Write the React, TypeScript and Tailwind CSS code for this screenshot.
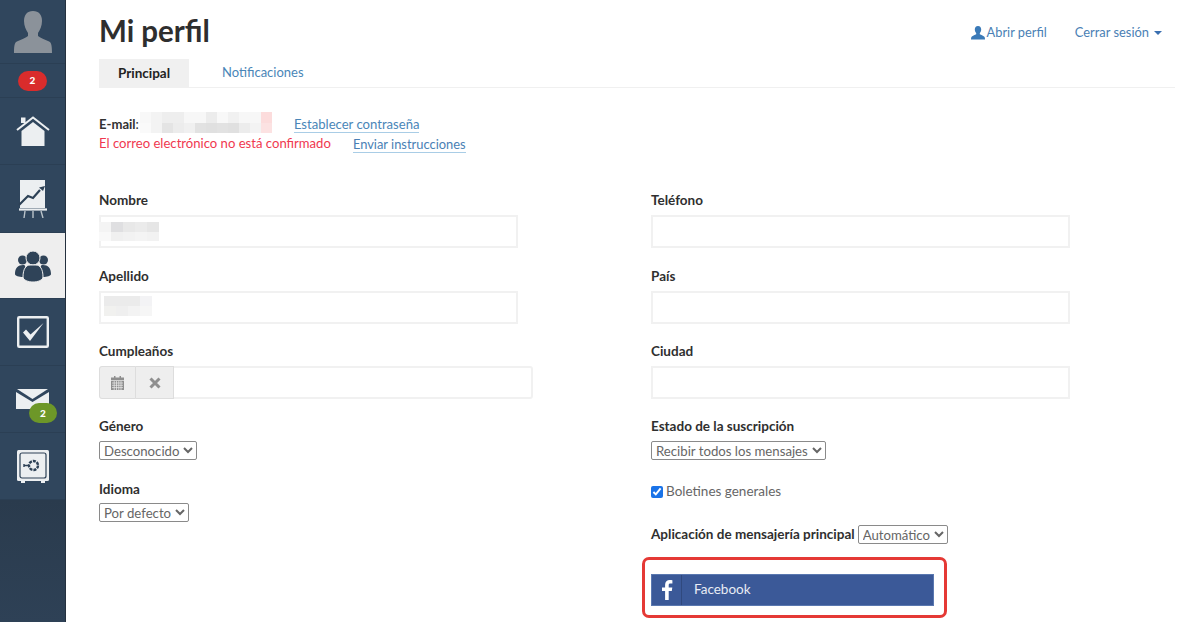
import { ReactNode } from "react";

const font = { fontFamily: "Lato, 'Open Sans', sans-serif" };

function Blur({ rows, size, h }: { rows: string[][]; size: number; h: number }) {
  return (
    <div className="flex flex-col">
      {rows.map((r, i) => (
        <div key={i} className="flex">
          {r.map((c, j) => (
            <div key={j} style={{ width: size, height: h, background: c }} />
          ))}
        </div>
      ))}
    </div>
  );
}

function NavItem({ active, children, h }: { active?: boolean; children: ReactNode; h: string }) {
  return (
    <div
      className={`${h} relative flex items-center justify-center border-b border-[#2b3f54] ${
        active ? "bg-[#eeeeee]" : ""
      }`}
    >
      {children}
    </div>
  );
}

function Sidebar() {
  return (
    <aside className="w-[66px] h-full shrink-0 flex flex-col bg-[#2d3f52] border-r border-[#25313f]">
      <div className="bg-[#30465d] flex flex-col">
        <NavItem h="h-[64px]">
          <svg width="44" height="44" viewBox="0 0 44 44">
            <path
              d="M22 1c-6 0-9 4-9 10 0 5 2 9 4 12v3c-2 2-6 3-10 5-3 1-4 3-4 12h38c0-9-1-11-4-12-4-2-8-3-10-5v-3c2-3 4-7 4-12 0-6-3-10-9-10z"
              fill="#8b929a"
            />
          </svg>
        </NavItem>
        <NavItem h="h-[34px]">
          <span className="w-[29px] h-[20px] rounded-full bg-[#d92c2c] text-white text-[10px] font-black flex items-center justify-center">
            2
          </span>
        </NavItem>
        <NavItem h="h-[67px]">
          <svg width="34" height="31" viewBox="0 0 34 31">
            <path d="M5.500 15 17 6l11.500 9v15h-23z" fill="#eceff1" />
            <path d="M1 14 17 1.500 33 14" fill="none" stroke="#eceff1" strokeWidth="2" />
            <path d="M5 1.500h4.500v5.500H5z" fill="#eceff1" />
          </svg>
        </NavItem>
        <NavItem h="h-[68px]">
          <svg width="30" height="38" viewBox="0 0 30 38">
            <path d="M2 0h25v28H2z" fill="#eceff1" />
            <path d="M1 29.500h28" stroke="#eceff1" strokeWidth="2.200" />
            <path d="M7 31 6 38M15 31v7M23 31l2 7" stroke="#b9c2c9" strokeWidth="1.400" />
            <path d="M1 25 10 16l5 2 7-8" fill="none" stroke="#2d4156" strokeWidth="2.200" />
            <path d="m27 6-6 1.500 4 3.500z" fill="#2d4156" />
          </svg>
        </NavItem>
        <NavItem h="h-[66px]" active>
          <svg width="36" height="32" viewBox="0 0 36 32">
            <circle cx="7.500" cy="10" r="4.500" fill="#2f4358" />
            <circle cx="28.500" cy="10" r="4.500" fill="#2f4358" />
            <path d="M0 24c0-6 3-9 8-9 3 0 2 2 2 4l-2 8c-4 0-8-1-8-3z" fill="#2f4358" />
            <path d="M36 24c0-6-3-9-8-9-3 0-2 2-2 4l2 8c4 0 8-1 8-3z" fill="#2f4358" />
            <circle cx="18" cy="8" r="7" fill="#2f4358" stroke="#eeeeee" strokeWidth="1" />
            <path
              d="M8 27c0-8 3-12 7-12h6c4 0 7 4 7 12 0 3-5 5-10 5s-10-2-10-5z"
              fill="#2f4358"
              stroke="#eeeeee"
              strokeWidth="1"
            />
          </svg>
        </NavItem>
        <NavItem h="h-[67px]">
          <svg width="32" height="32" viewBox="0 0 32 32">
            <rect x="1.200" y="1.200" width="29.600" height="29.600" rx="1" fill="none" stroke="#eceff1" strokeWidth="2.400" />
            <path d="M6 16.500 13 25 26.500 7 13.500 18.500 9 13.500z" fill="#eceff1" />
          </svg>
        </NavItem>
        <NavItem h="h-[67px]">
          <svg width="33" height="20" viewBox="0 0 33 20">
            <path d="M0 3v17h33V3L16.500 13z" fill="#eceff1" />
            <path d="M1 0h31L16.500 10z" fill="#eceff1" />
          </svg>
          <span className="absolute left-[29px] top-[37px] w-[28px] h-[20px] rounded-full bg-[#6d9728] text-white text-[10px] font-black flex items-center justify-center">
            2
          </span>
        </NavItem>
        <NavItem h="h-[67px]">
          <svg width="32" height="33" viewBox="0 0 32 33">
            <rect x="0" y="0" width="32" height="31" rx="1.500" fill="#eceff1" />
            <rect x="3" y="3" width="26" height="25" rx="2" fill="none" stroke="#2d4156" strokeWidth="1.200" />
            <path d="M4 31h4v2H4zM24 31h4v2h-4z" fill="#eceff1" />
            <circle cx="16.500" cy="15.500" r="4.500" fill="none" stroke="#2d4156" strokeWidth="2.400" strokeDasharray="3 1" />
            <path d="M7 15.500h4M7 14v3" stroke="#2d4156" strokeWidth="1.400" />
          </svg>
        </NavItem>
      </div>
      <div className="flex-1 bg-gradient-to-b from-[#2a3b4d] to-[#2e4156]" />
    </aside>
  );
}

function Label({ children }: { children: ReactNode }) {
  return <label className="block text-[13.5px] leading-[18px] font-bold text-[#2f2f2f]">{children}</label>;
}

function Field({ label, blur, mb = "mb-[18.500px]" }: { label: string; blur?: ReactNode; mb?: string }) {
  return (
    <div className={mb}>
      <Label>{label}</Label>
      <div className="relative mt-[6px] w-[419px] h-[33px] border-2 border-[#f1f1f1] bg-white">{blur}</div>
    </div>
  );
}

function NativeSelect({ value }: { value: string }) {
  return (
    <select
      defaultValue={value}
      className="h-[19px] border border-[#8a8a8a] rounded-[2px] bg-white text-[13.200px] leading-[17px] text-[#666666] pl-0"
      style={{ ...font, appearance: "auto" }}
    >
      <option>{value}</option>
    </select>
  );
}

export default function App() {
  return (
    <div className="h-[622px] w-[1200px] overflow-hidden flex bg-white" style={font}>
      <Sidebar />
      <main className="flex-1 pl-[33px] pr-[25px]">
        <header className="flex items-start justify-between pt-[13px] h-[59px]">
          <h1 className="text-[29.500px] leading-[36px] font-bold text-[#2e2e2e]">Mi perfil</h1>
          <div className="flex items-center gap-[28px] text-[#4a7fb5] pt-[10px] pr-[13px]">
            <a className="flex items-center gap-[2px] text-[12.800px]">
              <svg width="14" height="14" viewBox="0 0 14 14">
                <path
                  d="M7 0C4.800 0 3.800 1.600 3.800 3.600c0 1.400.6 2.700 1.400 3.600v1C4 9 1 9.600.4 11c-.3.800-.4 1.600-.4 2.500h14c0-.9-.1-1.700-.4-2.500C13 9.600 10 9 8.800 8.200v-1c.8-.9 1.400-2.200 1.400-3.600C10.200 1.600 9.200 0 7 0z"
                  fill="#3a7ab8"
                />
              </svg>
              Abrir perfil
            </a>
            <a className="flex items-center gap-[5px] text-[12.900px]">
              Cerrar sesión
              <span className="w-0 h-0 border-x-[4px] border-x-transparent border-t-[4px] border-t-[#3a6fb0]" />
            </a>
          </div>
        </header>

        <nav className="flex h-[29px] border-b border-[#f0f0f0] text-[13px]">
          <div className="w-[90px] bg-[#f0f0f0] font-bold text-[13.500px] text-[#222222] flex items-center justify-center">Principal</div>
          <div className="pl-[33px] text-[#4a86b8] flex items-center">Notificaciones</div>
        </nav>

        <section className="mt-[24px] text-[13.100px] leading-[19px]">
          <div className="flex items-center h-[21px]">
            <span className="font-bold text-[#333333] mt-[3px]">E-mail</span>
            <span className="text-[#333333] mt-[3px]">:</span>
            <div className="w-[132px] ml-[1px]">
              <Blur
                size={11}
                h={10.500}
                rows={[
                  ["#f8f8f8", "#f3f3f3", "#eeeeee", "#eeeeee", "#f7f7f7", "#f7f7f7", "#ececec", "#f8f8f8", "#f1f1f1", "#f7f7f7", "#f7f7f7", "#fcdcdc"],
                  ["#fafafa", "#f3f3f3", "#e4e4e4", "#ececec", "#f0f0f0", "#e2e2e2", "#e0e0e0", "#e2e2e2", "#e0e0e0", "#ececec", "#f3f3f3", "#fce2e2"],
                ]}
              />
            </div>
            <a className="ml-[22px] text-[#4a86b8] border-b border-[#a9cde6] leading-[15px] mt-[5px]">Establecer contraseña</a>
          </div>
          <div className="flex items-center h-[19px] mt-[1px]">
            <span className="text-[#f0384f]">El correo electrónico no está confirmado</span>
            <a className="ml-[22px] text-[12.900px] text-[#4a7fb5] border-b border-[#a9cde6] leading-[15px] mt-[2px]">Enviar instrucciones</a>
          </div>
        </section>

        <div className="grid grid-cols-[552px_1fr] mt-[38px]">
          <div>
            <Field
              label="Nombre"
              blur={
                <div className="absolute left-[-2px] top-[5px]">
                  <Blur
                    size={12}
                    h={9.500}
                    rows={[
                      ["#f4f4f4", "#dfdfe1", "#e8e8e8", "#ebebeb", "#e6e6e6"],
                      ["#f9f9f9", "#f0f0f0", "#f2f2f2", "#f4f4f4", "#f2f2f2"],
                    ]}
                  />
                </div>
              }
            />
            <Field
              label="Apellido"
              blur={
                <div className="absolute left-[3px] top-[3px]">
                  <Blur
                    size={12}
                    h={10}
                    rows={[
                      ["#ebebeb", "#ebebeb", "#ebebeb", "#f3f3f5"],
                      ["#f1f1ef", "#efefef", "#f3f3f3", "#f6f6f6"],
                    ]}
                  />
                </div>
              }
            />
            <div className="mb-[18px]">
              <Label>Cumpleaños</Label>
              <div className="mt-[6px] flex w-[434px] h-[33px] border-2 border-[#f1f1f1] rounded-[3px]">
                <div className="w-[37px] -my-[2px] -ml-[2px] bg-[#eeeeee] border border-[#dddddd] rounded-l-[3px] flex items-center justify-center">
                  <svg width="13" height="14" viewBox="0 0 13 14">
                    <path d="M0 1.500h13V14H0z" fill="#8f8f8f" />
                    <path
                      d="M0 4.500h13M1 7h11M1 9.300h11M1 11.600h11M3.200 5v9M5.500 5v9M7.800 5v9M10 5v9"
                      stroke="#eeeeee"
                      strokeWidth=".7"
                    />
                    <path d="M3 0h1.500v2H3zM8.500 0H10v2H8.500z" fill="#8f8f8f" />
                  </svg>
                </div>
                <div className="w-[38px] -my-[2px] bg-[#eeeeee] border border-l-0 border-[#dddddd] flex items-center justify-center">
                  <svg width="12" height="12" viewBox="0 0 12 12">
                    <path d="M1.500 1.500l9 9M10.500 1.500l-9 9" stroke="#8f8f8f" strokeWidth="3" />
                  </svg>
                </div>
                <div className="flex-1" />
              </div>
            </div>
            <div className="mb-[20px]">
              <Label>Género</Label>
              <div className="mt-[6px] flex">
                <NativeSelect value="Desconocido" />
              </div>
            </div>
            <div>
              <Label>Idioma</Label>
              <div className="mt-[5px] flex">
                <NativeSelect value="Por defecto" />
              </div>
            </div>
          </div>

          <div>
            <Field label="Teléfono" />
            <Field label="País" />
            <Field label="Ciudad" mb="mb-[18px]" />
            <div>
              <Label>Estado de la suscripción</Label>
              <div className="mt-[6px] flex">
                <NativeSelect value="Recibir todos los mensajes" />
              </div>
            </div>
            <div className="mt-[22.500px] flex items-center h-[18px] text-[13.500px] text-[#666666]">
              <input type="checkbox" defaultChecked className="w-[12px] h-[12px] m-0 mr-[3px] accent-[#1a73e8]" />
              Boletines generales
            </div>
            <div className="mt-[24px] flex items-center gap-[3px]">
              <Label>Aplicación de mensajería principal</Label>
              <NativeSelect value="Automático" />
            </div>
            <div className="mt-[13px] -ml-[9px] w-[305px] h-[61px] border-[3px] border-[#e53935] rounded-[7px] pl-[6px] pt-[14px]">
              <div className="w-[283px] h-[32px] bg-[#3b5998] flex items-center text-[13.500px] text-[#e8ecf4] border border-[#5a78b0]">
                <div className="w-[30px] h-full border-r border-[#30497e] flex items-center justify-center">
                  <svg width="12" height="20" viewBox="0 0 12 20">
                    <path
                      d="M7.700 20v-9h3.100l.5-3.600H7.700V5.200c0-1 .3-1.700 1.800-1.700h1.900V.2C11 .1 10 0 8.800 0 6 0 4.100 1.700 4.100 4.800v2.600H1V11h3.100v9z"
                      fill="#ffffff"
                    />
                  </svg>
                </div>
                <span className="ml-[12px]">Facebook</span>
              </div>
            </div>
          </div>
        </div>
      </main>
    </div>
  );
}
